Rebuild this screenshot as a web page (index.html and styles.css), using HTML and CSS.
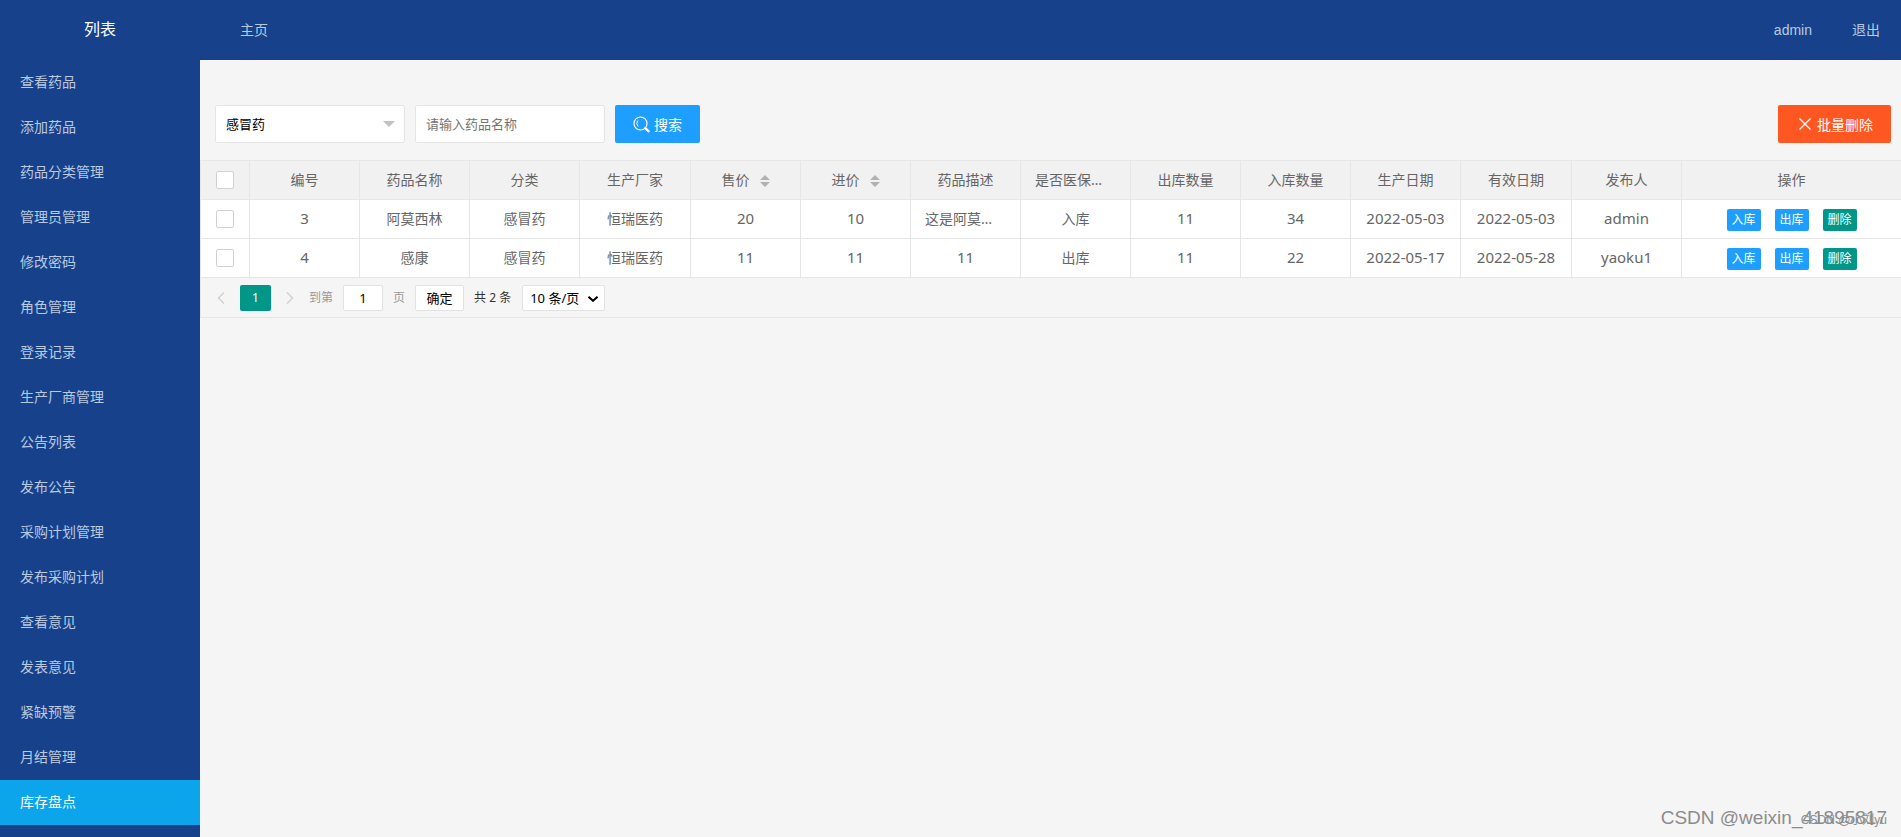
FILE: index.html
```html
<!DOCTYPE html>
<html lang="zh-CN">
<head>
<meta charset="utf-8">
<title>库存盘点</title>
<link rel="stylesheet" href="styles.css">
</head>
<body>
<header class="header">
  <div class="logo">列表</div>
  <nav class="nav-left"><a href="#">主页</a></nav>
  <nav class="nav-right"><a href="#">admin</a><a href="#">退出</a></nav>
</header>
<div class="body">
  <nav class="side">
    <a href="#">查看药品</a>
    <a href="#">添加药品</a>
    <a href="#">药品分类管理</a>
    <a href="#">管理员管理</a>
    <a href="#">修改密码</a>
    <a href="#">角色管理</a>
    <a href="#">登录记录</a>
    <a href="#">生产厂商管理</a>
    <a href="#">公告列表</a>
    <a href="#">发布公告</a>
    <a href="#">采购计划管理</a>
    <a href="#">发布采购计划</a>
    <a href="#">查看意见</a>
    <a href="#">发表意见</a>
    <a href="#">紧缺预警</a>
    <a href="#">月结管理</a>
    <a href="#" class="active">库存盘点</a>
  </nav>
  <main class="main">
    <form class="filters">
      <div class="select-wrap">
        <select class="field" aria-label="药品分类"><option>感冒药</option></select>
        <svg class="caret" viewBox="0 0 12 6" aria-hidden="true"><path d="M0 0H12L6 6Z" fill="#c2c2c2"/></svg>
      </div>
      <input class="field" type="text" placeholder="请输入药品名称" aria-label="药品名称">
      <button class="btn btn-search" type="button">
        <svg class="icon-search" viewBox="0 0 17 17" fill="none" stroke="#fff" aria-hidden="true"><circle cx="7.5" cy="7.5" r="6.5" stroke-width="1.2"/><path d="M5 4.5C3.6 6 3.6 8.500 5 10.300" stroke-width="1"/><path d="M12.200 12.200L15.500 15.200" stroke-width="2.400" stroke-linecap="round"/></svg>
        <span>搜索</span>
      </button>
      <button class="btn btn-danger" type="button">
        <svg class="icon-close" viewBox="0 0 12 12" fill="none" stroke="#fff" stroke-width="1.300" aria-hidden="true"><path d="M.5 .5L11.500 11.500M11.500 .5L.5 11.500"/></svg>
        <span>批量删除</span>
      </button>
    </form>
    <div class="table-view">
      <table class="table">
        <colgroup><col class="c-check"><col span="3" class="c-data"><col class="c-wide"><col span="7" class="c-data"><col class="c-wide"><col class="c-data"><col></colgroup>
        <thead>
          <tr>
            <th><input type="checkbox" aria-label="全选"></th>
            <th>编号</th><th>药品名称</th><th>分类</th><th>生产厂家</th>
            <th>售价<svg class="sort" viewBox="0 0 10 12" fill="#b2b2b2" aria-hidden="true"><path d="M0 5L5 0L10 5ZM0 7H10L5 12Z"/></svg></th>
            <th>进价<svg class="sort" viewBox="0 0 10 12" fill="#b2b2b2" aria-hidden="true"><path d="M0 5L5 0L10 5ZM0 7H10L5 12Z"/></svg></th>
            <th>药品描述</th><th>是否医保药品</th><th>出库数量</th><th>入库数量</th><th>生产日期</th><th>有效日期</th><th>发布人</th><th>操作</th>
          </tr>
        </thead>
        <tbody>
          <tr>
            <td><input type="checkbox" aria-label="选择 3"></td>
            <td class="num">3</td><td>阿莫西林</td><td>感冒药</td><td>恒瑞医药</td><td class="num">20</td><td class="num">10</td><td>这是阿莫西林</td><td>入库</td><td class="num">11</td><td class="num">34</td><td class="num">2022-05-03</td><td class="num">2022-05-03</td><td class="num">admin</td>
            <td><div class="ops"><button type="button">入库</button><button type="button">出库</button><button type="button" class="del">删除</button></div></td>
          </tr>
          <tr>
            <td><input type="checkbox" aria-label="选择 4"></td>
            <td class="num">4</td><td>感康</td><td>感冒药</td><td>恒瑞医药</td><td class="num">11</td><td class="num">11</td><td class="num">11</td><td>出库</td><td class="num">11</td><td class="num">22</td><td class="num">2022-05-17</td><td class="num">2022-05-28</td><td class="num">yaoku1</td>
            <td><div class="ops"><button type="button">入库</button><button type="button">出库</button><button type="button" class="del">删除</button></div></td>
          </tr>
        </tbody>
      </table>
      <div class="pager">
        <button type="button" class="arrow" aria-label="上一页"><svg viewBox="0 0 8 12" fill="none" stroke="#d2d2d2" stroke-width="1.500"><path d="M7 .5L1.500 6L7 11.500"/></svg></button>
        <span class="current">1</span>
        <button type="button" class="arrow" aria-label="下一页"><svg viewBox="0 0 8 12" fill="none" stroke="#d2d2d2" stroke-width="1.500"><path d="M1 .5L6.500 6L1 11.500"/></svg></button>
        <label class="skip">到第<input type="text" value="1">页</label>
        <button type="button" class="confirm">确定</button>
        <span class="total">共 2 条</span>
        <div class="limit">
          <select aria-label="每页条数"><option>10 条/页</option></select>
          <svg class="chevron" viewBox="0 0 10 6" fill="none" stroke="#000" stroke-width="2" aria-hidden="true"><path d="M.5 .8L5 4.800L9.500 .8"/></svg>
        </div>
      </div>
    </div>
  </main>
</div>
<div class="watermark">CSDN @weixin_41895817</div>
<div class="watermark small">CSDN @小刘yu</div>
</body>
</html>
```
FILE: styles.css
```css
* { box-sizing: border-box; }
html, body { height: 100%; }
body {
  margin: 0;
  display: flex;
  flex-direction: column;
  overflow: hidden;
  background: #f5f5f5;
  color: #666;
  font: 14px/24px "Noto Sans", "Noto Sans CJK SC", sans-serif;
}
a { color: inherit; text-decoration: none; }
button, input, select { font-family: inherit; margin: 0; }

.header {
  flex: none;
  display: flex;
  height: 60px;
  line-height: 60px;
  background: #17428b;
  color: #bac9e0;
  font-family: "Liberation Sans", "Noto Sans CJK SC", sans-serif;
}
.logo { width: 200px; text-align: center; font-size: 16px; color: #fff; }
.nav-left a, .nav-right a { display: inline-block; padding: 0 20px; }
.nav-left { padding-left: 20px; }
.nav-right { margin-left: auto; padding-right: 1px; }

.body { flex: 1; display: flex; min-height: 0; }
.side { flex: none; width: 200px; background: #17428b; color: #bac9e0; overflow: hidden; }
.side a { display: block; height: 45px; padding: 0 20px; line-height: 43px; }
.side .active { background: #0ca5eb; color: #fff; }

.main { flex: 1; min-width: 0; padding-top: 45px; }
.filters { display: flex; gap: 10px; padding: 0 10px 0 15px; }
.select-wrap { position: relative; }
.field {
  width: 190px;
  height: 38px;
  padding: 0 10px;
  border: 1px solid #e6e6e6;
  border-radius: 2px;
  background: #fff;
  color: #000;
  font-size: 13px;
  appearance: none;
  outline: none;
}
.field::placeholder { color: #757575; }
.caret { position: absolute; right: 10px; top: 16px; width: 12px; height: 6px; }
.btn {
  display: flex;
  align-items: center;
  height: 38px;
  padding: 0 18px;
  border: 0;
  border-radius: 2px;
  color: #fff;
  font-size: 14px;
}
.btn-search { background: #1e9fff; gap: 4px; }
.btn-danger { background: #ff5722; gap: 6px; padding-left: 21px; margin-left: auto; }
.icon-search { width: 17px; height: 17px; }
.icon-close { width: 12px; height: 12px; }

.table-view { margin-top: 17px; border: solid #e6e6e6; border-width: 1px 0 1px 1px; }
.table { width: 100%; table-layout: fixed; border-collapse: separate; border-spacing: 0; background: #fff; }
.c-check { width: 49px; }
.c-data { width: 110px; }
.c-wide { width: 111px; }
.table th, .table td {
  height: 39px;
  padding: 0 14px;
  border: solid #e6e6e6;
  border-width: 0 1px 1px 0;
  font-weight: 400;
  line-height: 28px;
  text-align: center;
  white-space: nowrap;
  overflow: hidden;
  text-overflow: ellipsis;
}
.table th { background: #f1f1f1; }
.table th:last-child, .table td:last-child { border-right: 0; }
.table th:first-child, .table td:first-child { padding: 0; }
.table .num { padding-bottom: 2px; font-size: 15px; }
.table input {
  display: block;
  width: 18px;
  height: 18px;
  margin: 0 auto;
  border: 1px solid #d2d2d2;
  border-radius: 2px;
  background: #fff;
  appearance: none;
}
.sort { width: 10px; height: 12px; margin-left: 10px; vertical-align: -2px; }
.ops { display: flex; justify-content: center; gap: 14px; padding-top: 2px; }
.ops button {
  width: 34px;
  height: 22px;
  padding: 0;
  border: 0;
  border-radius: 2px;
  background: #1e9fff;
  color: #fff;
  font-size: 12px;
  line-height: 22px;
}
.ops .del { background: #009688; }

.pager { display: flex; align-items: center; height: 39px; padding-left: 7px; font-size: 12px; line-height: 26px; }
.arrow { display: flex; justify-content: center; width: 26px; padding: 0; border: 0; background: none; }
.arrow svg { width: 8px; height: 12px; }
.current { width: 31px; margin: 0 6px; border-radius: 2px; background: #009688; color: #fff; text-align: center; }
.skip { display: flex; align-items: center; margin-left: 6px; color: #999; }
.skip input {
  width: 40px;
  height: 26px;
  margin: 0 10px;
  padding: 0;
  border: 1px solid #e2e2e2;
  border-radius: 2px;
  background: #fff;
  color: #000;
  font-size: 13px;
  text-align: center;
}
.confirm {
  width: 49px;
  height: 26px;
  margin: 0 10px;
  padding: 0;
  border: 1px solid #e2e2e2;
  border-radius: 2px;
  background: #fff;
  color: #000;
  font-size: 13px;
}
.total { color: #333; }
.limit { position: relative; margin-left: 11px; }
.limit select {
  display: block;
  width: 83px;
  height: 26px;
  padding: 0 7px;
  border: 1px solid #e2e2e2;
  border-radius: 2px;
  background: #fff;
  color: #000;
  font-size: 13px;
  appearance: none;
}
.chevron { position: absolute; right: 7px; top: 11px; width: 10px; height: 6px; }

.watermark {
  position: absolute;
  right: 14px;
  bottom: 8px;
  color: #8c8c8c;
  font: 19px/22px "Liberation Sans", "Noto Sans CJK SC", sans-serif;
}
.watermark.small { bottom: 6px; font-size: 12px; }
```
